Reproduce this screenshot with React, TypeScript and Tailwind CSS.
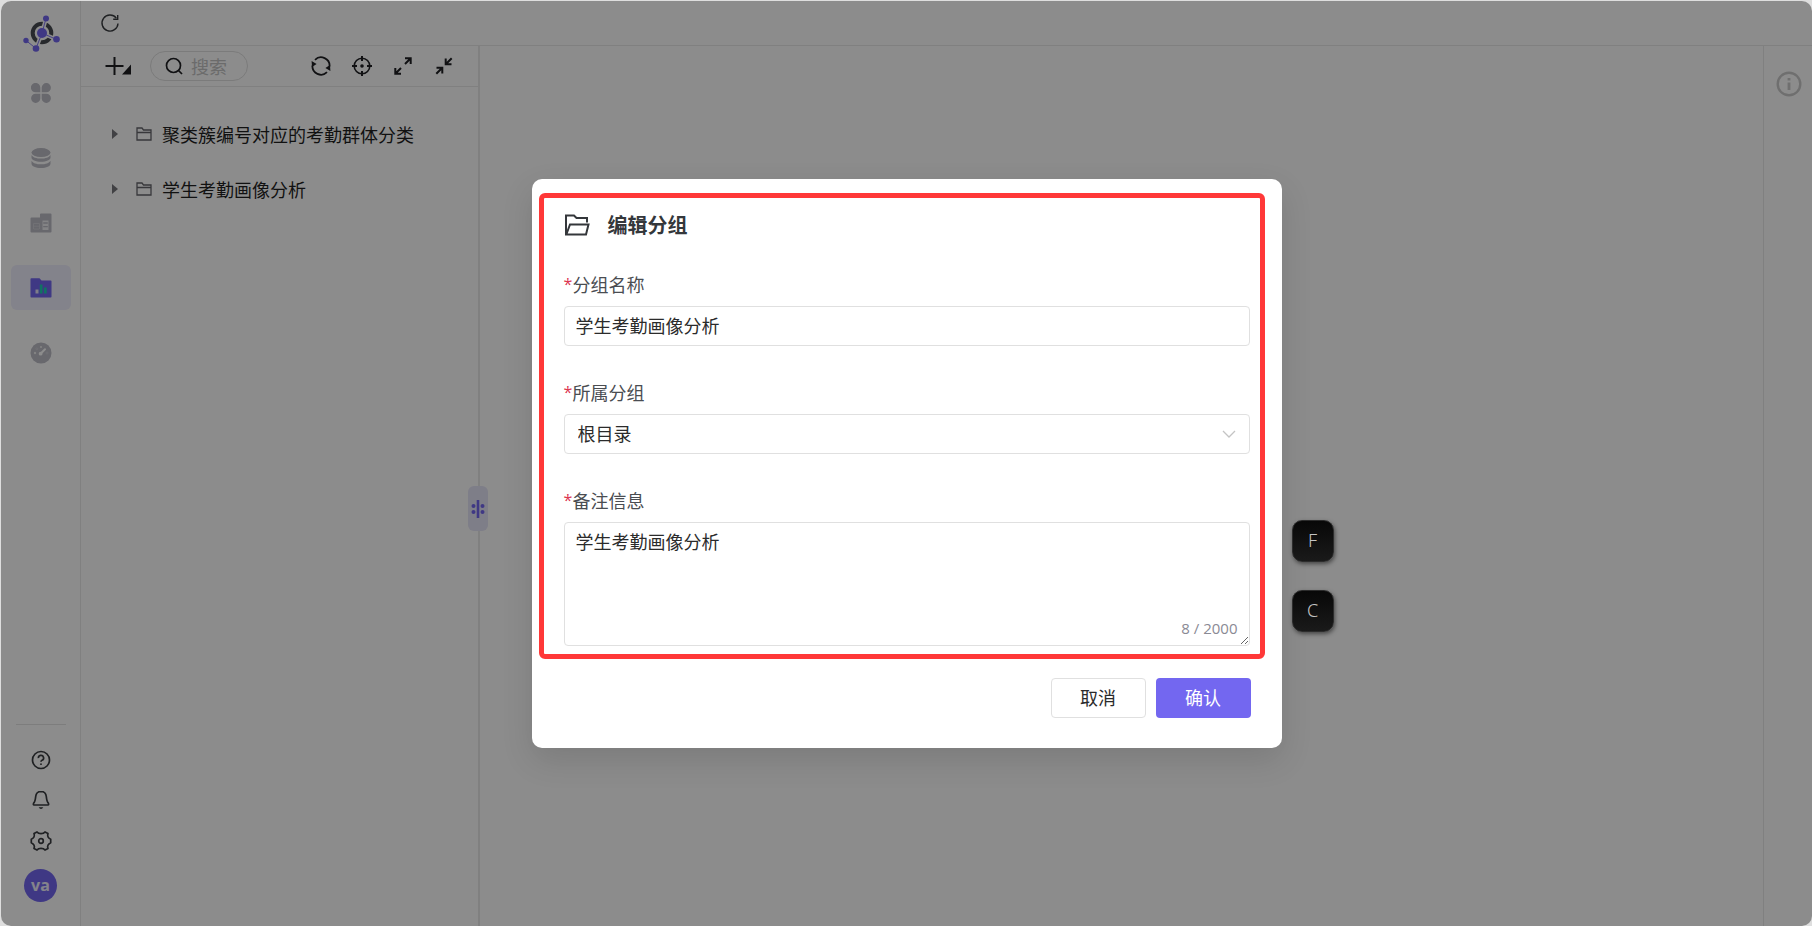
import { useState } from "react";
import type { ReactNode } from "react";

const NAME = "学生考勤画像分析";
const MAX_REMARK = 2000;

function Logo() {
    return (
        <svg viewBox="20 14 40 40" className="h-10 w-10">
            <circle cx="41" cy="33" r="9.3" fill="none" stroke="#484b52" strokeWidth="4" />
            <g stroke="#fff" strokeWidth="4">
                <path d="M41 33 45 18.5M41 33 55.5 39.5M41 33 35 48.5" />
            </g>
            <g stroke="#7367f0" strokeWidth="0.9">
                <path d="M41 33 45 18.5M41 33 55.5 39.5M41 33 35 48.5 25 40.5" fill="none" />
            </g>
            <g fill="#7367f0">
                <circle cx="41" cy="33" r="5" />
                <circle cx="45" cy="18.5" r="3" />
                <circle cx="55.5" cy="39.3" r="3.3" />
                <circle cx="35" cy="48.5" r="3.3" />
                <circle cx="25" cy="40.5" r="2.7" />
            </g>
        </svg>
    );
}

function AppsIcon() {
    return (
        <svg viewBox="0 0 20 20" className="h-5 w-5" fill="currentColor">
            <path d="M9.3 9.3H5a4.7 4.7 0 1 1 4.3-4.7zM10.7 9.3V4.6a4.6 4.6 0 1 1 4.6 4.7zM9.3 10.7v4.7a4.6 4.6 0 1 1-4.6-4.7zM10.7 10.7h4.6a4.6 4.6 0 1 1-4.6 4.7z" />
        </svg>
    );
}

function DatabaseIcon() {
    return (
        <svg viewBox="0 0 20 20" className="h-5 w-5" fill="currentColor">
            <ellipse cx="10" cy="4.6" rx="9.5" ry="4.5" />
            <path d="M.5 7c1.200 2.500 5 3.600 9.500 3.600S18.300 9.500 19.500 7v2.800c0 2.200-4.200 4-9.500 4s-9.500-1.800-9.500-4z" />
            <path d="M.5 12.700c1.200 2.500 5 3.600 9.500 3.600s8.300-1.100 9.500-3.600v3c0 2.400-4.200 4.300-9.500 4.300S.5 18.100.5 15.700z" />
        </svg>
    );
}

function ModelIcon() {
    return (
        <svg viewBox="0 0 22 20" className="h-5 w-[22px]">
            <path d="M1.500 4.500H10V1.500Q10 .5 11 .5H20.500Q21.500 .5 21.500 1.500V18.500Q21.500 19.500 20.500 19.500H1.500Q.5 19.500 .5 18.500V5.500Q.5 4.500 1.500 4.500z" fill="currentColor" />
            <path d="M3.500 10.500h6v5.500h-6zM3.500 13.200h6" fill="none" stroke="#d5d5db" strokeWidth="0.7" />
            <path d="M12.500 7.500h6v9.500h-6z" fill="#efeff2" />
            <path d="M13.200 10h4.600M13.200 13.700h4.600" stroke="currentColor" strokeWidth="1.300" />
        </svg>
    );
}

function ReportIcon() {
    return (
        <svg viewBox="0 0 22 20" className="h-5 w-[22px]">
            <path d="M1.300 .3H9.500L11.500 2.500H20.700Q21.500 2.500 21.500 3.300V18.700Q21.500 19.500 20.700 19.500H1.300Q.5 19.500 .5 18.700V1.100Q.5 .3 1.300 .3z" fill="#7367f0" />
            <path d="M5.500 11.500h3v4h-3z" fill="#e5e3fa" />
            <path d="M9.800 6.500h2.700v9H9.800zM14 9.500h2.700v6H14z" fill="#1fd0b4" />
        </svg>
    );
}

function GaugeIcon() {
    return (
        <svg viewBox="0 0 22 22" className="h-[22px] w-[22px]">
            <circle cx="11" cy="11" r="10.500" fill="currentColor" />
            <path d="m10.800 11.500 4.200-4.300" stroke="#fff" strokeWidth="2" strokeLinecap="round" />
            <circle cx="10.600" cy="11.700" r="1.900" fill="#fff" />
            <circle cx="11" cy="5" r="1.100" fill="#eee" />
            <circle cx="5" cy="11" r="1.200" fill="#eee" />
            <g fill="none" stroke="#d5d5db" strokeWidth="0.6">
                <circle cx="6.800" cy="6.800" r="1" />
                <circle cx="17" cy="11" r="1.100" />
            </g>
        </svg>
    );
}

function HelpIcon() {
    return (
        <svg viewBox="0 0 20 20" className="h-5 w-5" fill="none" stroke="currentColor" strokeWidth="1.700">
            <circle cx="10" cy="10" r="8.500" />
            <path d="M7.400 8.100A2.600 2.600 0 1 1 11 10.300C10.300 10.600 10 11 10 11.800" />
            <circle cx="10" cy="14.200" r="0.900" fill="currentColor" stroke="none" />
        </svg>
    );
}

function BellIcon() {
    return (
        <svg viewBox="0 0 20 20" className="h-5 w-5" fill="none" stroke="currentColor" strokeWidth="1.700" strokeLinejoin="round">
            <path d="M10 1.500C6.700 1.500 5 3.700 4.700 6.500C4.400 9.500 4.200 11.800 2.600 13.200Q2 15 3 15H17Q18 15 17.400 13.200C15.800 11.800 15.600 9.500 15.300 6.500C15 3.700 13.300 1.500 10 1.500z" />
            <path d="M7.700 17.200h4.600Q11.500 19 10 19T7.700 17.200z" fill="currentColor" stroke="none" />
        </svg>
    );
}

function SettingsIcon() {
    return (
        <svg viewBox="0 0 22 22" className="h-[22px] w-[22px]" fill="none" stroke="currentColor" strokeWidth="1.700" strokeLinejoin="round">
            <path d="M7 1.900Q8.200 3.600 11 3.600T15 1.900L18 3.600Q17.200 5.300 18 6.800T20.700 9.200V12.800Q18.800 13.700 18 15.200T18 18.400L15 20.100Q13.800 18.400 11 18.400T7 20.100L4 18.400Q4.800 16.700 4 15.200T1.300 12.800V9.200Q3.200 8.300 4 6.800T4 3.600z" />
            <circle cx="11" cy="11" r="2.300" />
        </svg>
    );
}

function ReloadIcon() {
    return (
        <svg viewBox="0 0 20 20" className="h-5 w-5" fill="none" stroke="currentColor" strokeWidth="1.400">
            <path d="M18 10.500a8 8 0 1 1-1.700-5.400" />
            <path d="M17.700 2v4.300h-4.500" />
        </svg>
    );
}

function AddIcon() {
    return (
        <svg viewBox="0 0 27 20" className="h-5 w-[27px]" fill="currentColor">
            <path d="M.5 9h8V1h2v8h8v2h-8v8h-2v-8h-8zM26 8.500v10H17z" />
        </svg>
    );
}

function SearchIcon() {
    return (
        <svg viewBox="0 0 18 18" className="h-[18px] w-[18px] shrink-0" fill="none" stroke="currentColor" strokeWidth="1.700">
            <circle cx="8.500" cy="8.500" r="7" />
            <path d="m13.500 13.500 3.500 3.500" />
        </svg>
    );
}

function SyncIcon() {
    return (
        <svg viewBox="0 0 20 20" className="h-5 w-5" fill="none" stroke="currentColor" strokeWidth="1.800">
            <path d="M4 3.800A8.600 8.600 0 0 1 18.600 10.500M16 16.200A8.600 8.600 0 0 1 1.400 9.500" />
            <path d="M.6 5 1 11 5.600 8zM19.400 15 19 9 14.400 12z" fill="currentColor" stroke="none" />
        </svg>
    );
}

function LocateIcon() {
    return (
        <svg viewBox="0 0 20 20" className="h-5 w-5" fill="none" stroke="currentColor" strokeWidth="1.600">
            <circle cx="10" cy="10" r="7.800" />
            <path d="M10 0v5M10 15V20M0 10h5M15 10H20" strokeWidth="2" />
            <circle cx="10" cy="10" r="1.800" fill="currentColor" stroke="none" />
        </svg>
    );
}

function ExpandIcon() {
    return (
        <svg viewBox="0 0 20 20" className="h-5 w-5" fill="none" stroke="currentColor" strokeWidth="2">
            <path d="M12 2.300H17.700V8M17.700 2.300 12 8M2.300 12v5.700H8M2.300 17.700 8 12" />
        </svg>
    );
}

function CollapseIcon() {
    return (
        <svg viewBox="0 0 20 20" className="h-5 w-5" fill="none" stroke="currentColor" strokeWidth="2">
            <path d="M11.700 2.500v5.800h5.800M11.700 8.300l6-6M2.500 11.700h5.800v5.800M8.300 11.700l-6 6" />
        </svg>
    );
}

function FolderIcon() {
    return (
        <svg viewBox="0 0 16 14" className="h-[14px] w-4" fill="none" stroke="currentColor" strokeWidth="1.300">
            <path d="M1 1h5l1.500 2H15v10H1zM1 5.500h14" />
        </svg>
    );
}

function FolderOpenIcon() {
    return (
        <svg viewBox="0 0 26 22" className="h-[22px] w-[26px]" fill="none" stroke="currentColor" strokeWidth="2">
            <path d="M23 8.500V4H12.500L10 1.500H2V20.500H22L24.500 10.500H6L2.500 20" />
        </svg>
    );
}

function InfoIcon() {
    return (
        <svg viewBox="0 0 26 26" className="h-[26px] w-[26px]" fill="none" stroke="currentColor" strokeWidth="2.400">
            <circle cx="13" cy="13" r="11.300" />
            <path d="M13 7v2.500M13 11.500V19" strokeWidth="2.800" />
        </svg>
    );
}

const navItems = [
    { label: "应用", icon: <AppsIcon />, active: false },
    { label: "数据", icon: <DatabaseIcon />, active: false },
    { label: "模型", icon: <ModelIcon />, active: false },
    { label: "报表", icon: <ReportIcon />, active: true },
    { label: "仪表盘", icon: <GaugeIcon />, active: false },
];

const tools = [
    { label: "同步", icon: <SyncIcon /> },
    { label: "定位", icon: <LocateIcon /> },
    { label: "展开", icon: <ExpandIcon /> },
    { label: "收起", icon: <CollapseIcon /> },
];

const groups = ["聚类簇编号对应的考勤群体分类", NAME];

function Sidebar() {
    return (
        <aside className="flex w-20 shrink-0 flex-col items-center border-r border-[#eaeaea] pb-6">
            <div className="flex h-[69px] items-center pb-1">
                <Logo />
            </div>
            <nav className="flex flex-col gap-5">
                {navItems.map((item) => (
                    <button
                        key={item.label}
                        aria-label={item.label}
                        className={
                            item.active
                                ? "flex h-[45px] w-[60px] items-center justify-center rounded-md bg-[#efeefd]"
                                : "flex h-[45px] w-[60px] items-center justify-center rounded-md text-[#bdbdc6]"
                        }
                    >
                        {item.icon}
                    </button>
                ))}
            </nav>
            <div className="mt-auto flex flex-col items-center text-[#3a3c40]">
                <div className="mb-[25px] h-px w-[50px] bg-[#e4e4e4]" />
                <div className="mb-[17px] flex flex-col items-center gap-5">
                    <button aria-label="帮助" className="h-5"><HelpIcon /></button>
                    <button aria-label="通知" className="h-5"><BellIcon /></button>
                    <button aria-label="设置" className="h-[22px]"><SettingsIcon /></button>
                </div>
                <button className="h-[33px] w-[33px] rounded-full bg-[#7367f0] pb-[2px] font-['Open_Sans',sans-serif] text-base leading-none font-bold text-white/90">
                    va
                </button>
            </div>
        </aside>
    );
}

function GroupPanel() {
    return (
        <section className="w-[399px] shrink-0 border-r-2 border-[#e9e9e9]">
            <div className="flex h-[41px] items-center border-b border-[#eaeaea] pr-6 pl-6 text-[#1f2024]">
                <button aria-label="新增"><AddIcon /></button>
                <label className="ml-[18px] flex h-[30px] w-[98px] items-center gap-2 rounded-full border border-[#e0e0e0] pl-[14px]">
                    <SearchIcon />
                    <input
                        aria-label="搜索"
                        placeholder="搜索"
                        className="w-full min-w-0 bg-transparent text-lg leading-6 outline-none placeholder:text-[#c4c4c4]"
                    />
                </label>
                <div className="ml-auto flex gap-[21px]">
                    {tools.map((tool) => (
                        <button key={tool.label} aria-label={tool.label}>{tool.icon}</button>
                    ))}
                </div>
            </div>
            <ul className="flex flex-col pt-[19px]">
                {groups.map((group) => (
                    <li key={group} className="flex h-[55px] items-center pl-[31px] text-lg text-[#1f1f1f]">
                        <svg viewBox="0 0 6 10" className="h-[10px] w-[6px] text-[#77777c]" fill="currentColor">
                            <path d="M0 0 6 5 0 10z" />
                        </svg>
                        <span className="mr-[10px] ml-[18px] text-[#66666c]"><FolderIcon /></span>
                        {group}
                    </li>
                ))}
            </ul>
        </section>
    );
}

function Field({ id, label, children }: { id: string; label: string; children: ReactNode }) {
    return (
        <div>
            <label htmlFor={id} className="mb-[10px] flex h-6 items-center gap-[3px] text-lg leading-6 text-[#4a4d52]">
                <span className="w-[6px] font-['Open_Sans',sans-serif] text-base text-[#dc3550]">*</span>
                {label}
            </label>
            {children}
        </div>
    );
}

function KeyHint({ children }: { children: ReactNode }) {
    return (
        <kbd className="flex h-[42px] w-[42px] items-center justify-center rounded-[10px] border border-[#2c2c2c] bg-linear-to-b from-[#080808] to-[#1a1a1a] pb-[2px] font-['Noto_Sans',sans-serif] text-lg font-light text-[#c4c4c4] shadow-[1px_2px_4px_rgba(0,0,0,0.5)]">
            {children}
        </kbd>
    );
}

function EditGroupDialog() {
    const [name, setName] = useState(NAME);
    const [remark, setRemark] = useState(NAME);

    return (
        <div
            role="dialog"
            aria-labelledby="dialog-title"
            className="relative w-[750px] rounded-[10px] bg-white pt-[14px] pb-[30px] shadow-[0_12px_32px_rgba(0,0,0,0.12)]"
        >
            <div className="mr-[17px] ml-[7px] rounded-md border-5 border-[#ff3838] pt-3 pr-[10px] pb-2 pl-5">
                <h2 id="dialog-title" className="mb-8 flex h-[30px] items-center gap-[18px] text-xl font-bold text-[#34373b]">
                    <FolderOpenIcon />
                    编辑分组
                </h2>
                <div className="flex flex-col gap-[34px]">
                    <Field id="group-name" label="分组名称">
                        <input
                            id="group-name"
                            value={name}
                            onChange={(e) => setName(e.target.value)}
                            className="block h-10 w-full rounded border border-[#e0e0e0] px-[11px] pb-[2px] text-lg text-[#2b2b2b] outline-none"
                        />
                    </Field>
                    <Field id="parent-group" label="所属分组">
                        <div className="relative">
                            <select
                                id="parent-group"
                                className="block h-10 w-full appearance-none rounded border border-[#e0e0e0] bg-white px-[13px] pb-[2px] text-lg text-[#2b2b2b] outline-none"
                            >
                                <option>根目录</option>
                            </select>
                            <svg viewBox="0 0 14 8" className="pointer-events-none absolute top-4 right-[14px] h-2 w-[14px]" fill="none" stroke="#c4c4c4" strokeWidth="1.300">
                                <path d="m1 1 6 6 6-6" />
                            </svg>
                        </div>
                    </Field>
                    <Field id="remark" label="备注信息">
                        <div className="relative">
                            <textarea
                                id="remark"
                                value={remark}
                                maxLength={MAX_REMARK}
                                onChange={(e) => setRemark(e.target.value)}
                                className="block h-[124px] w-full resize-y rounded border border-[#e0e0e0] px-[11px] py-1 text-lg leading-7 text-[#2b2b2b] outline-none"
                            />
                            <span className="pointer-events-none absolute right-3 bottom-2 font-['Open_Sans',sans-serif] text-[15px] leading-5 text-[#8a8a94]">
                                {remark.length} / {MAX_REMARK}
                            </span>
                        </div>
                    </Field>
                </div>
            </div>
            <div className="mt-[19px] mr-[31px] flex justify-end gap-[10px] text-lg">
                <button className="h-10 w-[95px] rounded border border-[#e0e0e0] pb-[2px] text-[#2b2b2b]">取消</button>
                <button className="h-10 w-[95px] rounded bg-[#7367f0] pb-[2px] text-white">确认</button>
            </div>
            <div className="absolute top-[341px] left-full ml-[10px] flex flex-col gap-7">
                <KeyHint>F</KeyHint>
                <KeyHint>C</KeyHint>
            </div>
        </div>
    );
}

export default function App() {
    return (
        <div className="h-screen bg-[#dedede] pt-px pl-px font-['Noto_Sans_CJK_SC',sans-serif]">
            <div className="relative flex h-full overflow-hidden rounded-[10px] bg-white">
                <Sidebar />
                <div className="flex min-w-0 flex-1 flex-col">
                    <header className="flex h-[45px] shrink-0 items-center border-b border-[#eaeaea] pl-[19px] text-[#3a3c40]">
                        <button aria-label="刷新"><ReloadIcon /></button>
                    </header>
                    <div className="relative flex min-h-0 flex-1">
                        <GroupPanel />
                        <main className="flex-1" />
                        <aside className="flex w-[49px] shrink-0 justify-center border-l border-[#eaeaea] pt-[25px] pl-px text-[#cbcbcb]">
                            <button aria-label="信息" className="h-[26px]"><InfoIcon /></button>
                        </aside>
                        {/* Drag handle sitting on the splitter */}
                        <button
                            aria-label="拖动"
                            className="absolute top-1/2 left-[387px] flex h-[45px] w-5 items-center justify-center rounded-md bg-[#e6e5f8]"
                        >
                            <svg viewBox="0 0 14 18" className="h-[18px] w-[14px]" fill="#7367f0">
                                <path d="M5.700 0h2.600v18H5.700z" />
                                <circle cx="2.500" cy="6" r="2" />
                                <circle cx="2.500" cy="12" r="2" />
                                <circle cx="11.500" cy="6" r="2" />
                                <circle cx="11.500" cy="12" r="2" />
                            </svg>
                        </button>
                    </div>
                </div>
                <div className="absolute inset-0 flex items-center justify-center bg-black/45">
                    <EditGroupDialog />
                </div>
            </div>
        </div>
    );
}
